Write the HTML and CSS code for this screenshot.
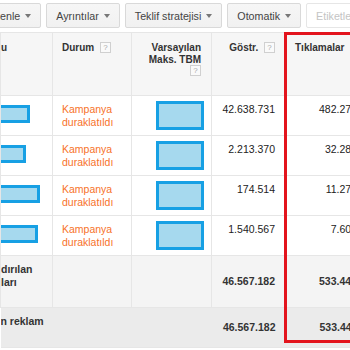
FILE: index.html
```html
<!DOCTYPE html>
<html lang="tr">
<head>
    <meta charset="UTF-8">
    <meta name="viewport" content="width=device-width, initial-scale=1.0">
    <title>Kampanyalar</title>
    <link rel="stylesheet" href="styles.css">
</head>
<body>

    <div class="toolbar">
        <button class="btn">Düzenle <span class="caret"></span></button>
        <button class="btn">Ayrıntılar <span class="caret"></span></button>
        <button class="btn">Teklif stratejisi <span class="caret"></span></button>
        <button class="btn">Otomatik <span class="caret"></span></button>
        <button class="btn" disabled>Etiketle <span class="caret"></span></button>
    </div>

    <div class="grid-wrap">
        <table class="stats">
            <colgroup>
                <col class="c-name">
                <col class="c-status">
                <col class="c-bid">
                <col class="c-impr">
                <col class="c-clicks">
            </colgroup>
            <thead>
                <tr>
                    <th class="name">u</th>
                    <th>Durum <span class="help">?</span></th>
                    <th class="num">Varsayılan<br>Maks. TBM<br><span class="help">?</span></th>
                    <th class="num">Göstr. <span class="help">?</span></th>
                    <th class="num">Tıklamalar <span class="help">?</span></th>
                </tr>
            </thead>
            <tbody>
                <tr>
                    <td class="name"><span class="mask mask-name w1"></span></td>
                    <td class="status">Kampanya<br>duraklatıldı</td>
                    <td class="num"><span class="mask mask-bid"></span></td>
                    <td class="num">42.638.731</td>
                    <td class="num">482.273</td>
                </tr>
                <tr>
                    <td class="name"><span class="mask mask-name w2"></span></td>
                    <td class="status">Kampanya<br>duraklatıldı</td>
                    <td class="num"><span class="mask mask-bid"></span></td>
                    <td class="num">2.213.370</td>
                    <td class="num">32.281</td>
                </tr>
                <tr>
                    <td class="name"><span class="mask mask-name w3"></span></td>
                    <td class="status">Kampanya<br>duraklatıldı</td>
                    <td class="num"><span class="mask mask-bid"></span></td>
                    <td class="num">174.514</td>
                    <td class="num">11.276</td>
                </tr>
                <tr>
                    <td class="name"><span class="mask mask-name w4"></span></td>
                    <td class="status">Kampanya<br>duraklatıldı</td>
                    <td class="num"><span class="mask mask-bid"></span></td>
                    <td class="num">1.540.567</td>
                    <td class="num">7.609</td>
                </tr>
            </tbody>
            <tfoot>
                <tr class="total">
                    <td class="name">dırılan<br>ları</td>
                    <td></td>
                    <td></td>
                    <td class="num">46.567.182</td>
                    <td class="num">533.441</td>
                </tr>
                <tr class="total all">
                    <td class="name">n reklam</td>
                    <td></td>
                    <td></td>
                    <td class="num">46.567.182</td>
                    <td class="num">533.441</td>
                </tr>
            </tfoot>
        </table>
        <!-- vurgu kutusu -->
        <div class="highlight"></div>
    </div>

</body>
</html>
```

FILE: styles.css
```css
html, body {
    overflow: hidden;
}

body {
    font-family: "Liberation Sans", Arial, sans-serif;
    margin: 0;
    background-color: white;
    color: #222;
}

.toolbar {
    display: flex;
    gap: 5px;
    height: 25px;
    margin: 3px 0 4px -29px;
}

.btn {
    display: flex;
    align-items: center;
    gap: 5px;
    flex-shrink: 0;
    height: 25px;
    padding: 0 9px;
    border: 1px solid #d9d9d9;
    border-radius: 2px;
    background: linear-gradient(#f6f6f6, #f1f1f1);
    color: #444;
    font-family: inherit;
    font-size: 10.7px;
    white-space: nowrap;
}

.btn:disabled {
    background: white;
    border-color: #e6e6e6;
    color: #c4c4c4;
}

.caret {
    width: 0;
    height: 0;
    border-left: 3px solid transparent;
    border-right: 3px solid transparent;
    border-top: 4px solid #777;
}

.btn:disabled .caret {
    border-top-color: #ddd;
}

.grid-wrap {
    position: relative;
}

.stats {
    width: 367px;
    table-layout: fixed;
    border-collapse: collapse;
    font-size: 10.5px;
}

.c-name { width: 52px; }
.c-status { width: 79px; }
.c-bid { width: 80px; }
.c-impr { width: 74px; }
.c-clicks { width: 82px; }

.stats th, .stats td {
    border: 1px solid #e6e6e6;
    padding: 7px 9px 0 9px;
    vertical-align: top;
    text-align: left;
    line-height: 13px;
    white-space: nowrap;
    overflow: hidden;
}

.stats th {
    height: 63px;
    box-sizing: border-box;
    padding-top: 9px;
    background-color: #f6f6f6;
    font-size: 10px;
    line-height: 11.5px;
    color: #333;
}

.stats tbody td {
    height: 40px;
    box-sizing: border-box;
}

.stats .num {
    text-align: right;
    padding-right: 10px;
}

.stats .name {
    padding-left: 0;
    padding-right: 0;
}

.help {
    display: inline-block;
    width: 9px;
    height: 9px;
    margin-left: 3px;
    border: 1px solid #d0d0d0;
    background-color: #fafafa;
    color: #aaa;
    font-size: 8px;
    font-weight: normal;
    line-height: 9px;
    text-align: center;
    vertical-align: top;
}

.status {
    color: #f7722a;
}

.mask {
    display: block;
    box-sizing: border-box;
    border: 3px solid #17a0e4;
    background-color: #a6d9ee;
}

.mask-name {
    height: 18px;
    margin: 2px 0 0 -4px;
}

.w1 { width: 33px; }
.w2 { width: 29px; }
.w3 { width: 43px; }
.w4 { width: 41px; }

.mask-bid {
    width: 48px;
    height: 29px;
    margin: -2px -3px 0 auto;
}

.total td {
    height: 52px;
    box-sizing: border-box;
    background-color: #f4f4f4;
    font-weight: bold;
    color: #333;
}

.total td.num {
    vertical-align: middle;
    padding-top: 0;
}

.total.all td {
    height: 40px;
    background-color: #ebebeb;
    border-left: none;
    border-right: none;
}

.highlight {
    position: absolute;
    top: 0;
    left: 284px;
    width: 100px;
    height: 311px;
    box-sizing: border-box;
    border: 3px solid #e3141d;
}
```
